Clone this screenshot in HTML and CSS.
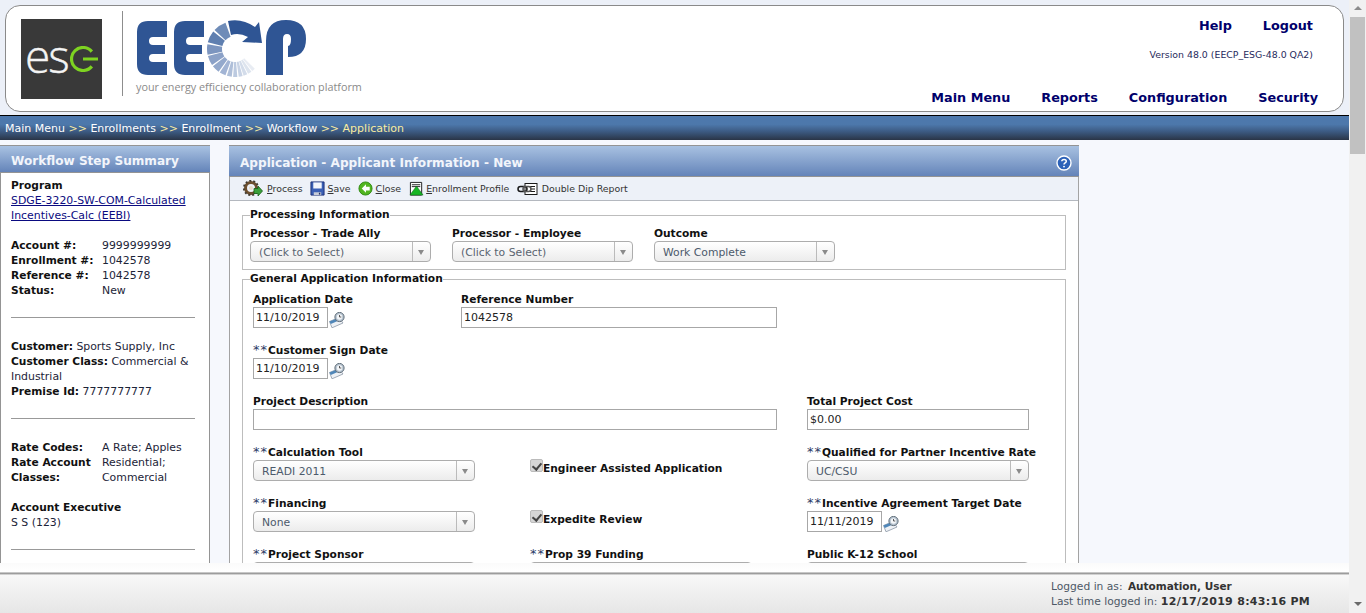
FILE: index.html
```html
<!DOCTYPE html>
<html lang="en">
<head>
<meta charset="utf-8">
<title>EECP - Application</title>
<link rel="stylesheet" href="styles.css">
</head>
<body>
<div class="viewport">
  <div class="page">
    <header class="masthead">
      <div class="brand">
        <div class="esg-logo"><span class="esg-es">es</span><svg class="esg-g" viewBox="0 0 28 26" width="28" height="26"><path d="M21.800 5.600A11.500 11.500 0 1 0 21.800 20.400" fill="none" stroke="#7ed321" stroke-width="3.200"/><path d="M13 13H28" fill="none" stroke="#7ed321" stroke-width="3"/></svg></div>
        <div class="brand-rule"></div>
        <div class="eecp">
          <svg class="eecp-mark" viewBox="0 0 175 60" width="175" height="60" role="img" aria-label="EECP">
            <g fill="#2f5594">
              <path d="M12 1H31V17H17Q13 17 13 21Q13 25 17 25H29V34H17Q13 34 13 38Q13 42 17 42H31V55H12Q1 55 1 44V12Q1 1 12 1Z"/>
              <path transform="translate(37 0)" d="M12 1H31V17H17Q13 17 13 21Q13 25 17 25H29V34H17Q13 34 13 38Q13 42 17 42H31V55H12Q1 55 1 44V12Q1 1 12 1Z"/>
              <path d="M130 55V21Q130 0 150 0Q170 0 170 19Q170 37 152 37V26Q155 26 155 19Q155 14 151 14Q147 14 147 19V55Z"/>
              <path d="M92 1Q106 -2 119 7L123 2L126 23L106 22L112 17Q103 12 95 15Z"/>
            </g>
            <g fill="none" stroke-width="15">
              <circle cx="99" cy="29" r="20.500" pathLength="360" stroke="#6f8cb8" stroke-dasharray="27 360" stroke-dashoffset="-223"/>
              <circle cx="99" cy="29" r="20.500" pathLength="360" stroke="#5f7fb0" stroke-dasharray="25 360" stroke-dashoffset="-194"/>
              <circle cx="99" cy="29" r="20.500" pathLength="360" stroke="#7c95bf" stroke-dasharray="22 360" stroke-dashoffset="-168"/>
              <circle cx="99" cy="29" r="20.500" pathLength="360" stroke="#8ba1c7" stroke-dasharray="20 360" stroke-dashoffset="-145"/>
              <circle cx="99" cy="29" r="20.500" pathLength="360" stroke="#94a9cc" stroke-dasharray="16 360" stroke-dashoffset="-126"/>
              <circle cx="99" cy="29" r="20.500" pathLength="360" stroke="#a2b4d4" stroke-dasharray="13 360" stroke-dashoffset="-110"/>
              <circle cx="99" cy="29" r="20.500" pathLength="360" stroke="#afbfd9" stroke-dasharray="10 360" stroke-dashoffset="-97"/>
              <circle cx="99" cy="29" r="20.500" pathLength="360" stroke="#bccae0" stroke-dasharray="9 360" stroke-dashoffset="-85"/>
              <circle cx="99" cy="29" r="20.500" pathLength="360" stroke="#c8d3e5" stroke-dasharray="8 360" stroke-dashoffset="-74"/>
              <circle cx="99" cy="29" r="20.500" pathLength="360" stroke="#d3dcea" stroke-dasharray="8 360" stroke-dashoffset="-64"/>
              <circle cx="99" cy="29" r="20.500" pathLength="360" stroke="#dde4ee" stroke-dasharray="8 360" stroke-dashoffset="-54"/>
              <circle cx="99" cy="29" r="20.500" pathLength="360" stroke="#e8ecf3" stroke-dasharray="7 360" stroke-dashoffset="-45"/>
            </g>
          </svg>
          <div class="tagline">your energy efficiency collaboration platform</div>
        </div>
      </div>
      <div class="mast-right">
        <nav class="util-nav"><a>Help</a><a>Logout</a></nav>
        <div class="version">Version 48.0 (EECP_ESG-48.0 QA2)</div>
        <nav class="main-nav"><a>Main Menu</a><a>Reports</a><a>Configuration</a><a>Security</a></nav>
      </div>
    </header>

    <div class="crumbs"><a>Main Menu</a><i>&gt;&gt;</i><a>Enrollments</a><i>&gt;&gt;</i><a>Enrollment</a><i>&gt;&gt;</i><a>Workflow</a><i>&gt;&gt;</i><b>Application</b></div>

    <main class="content">
      <aside class="summary">
        <h2 class="panel-title">Workflow Step Summary</h2>
        <div class="summary-body">
          <div class="strong">Program</div>
          <a class="link">SDGE-3220-SW-COM-Calculated Incentives-Calc (EEBI)</a>
          <dl class="facts first-facts">
            <dt>Account #:</dt><dd>9999999999</dd>
            <dt>Enrollment #:</dt><dd>1042578</dd>
            <dt>Reference #:</dt><dd>1042578</dd>
            <dt>Status:</dt><dd>New</dd>
          </dl>
          <hr class="sep">
          <div class="para"><b>Customer:</b> Sports Supply, Inc</div>
          <div class="para"><b>Customer Class:</b> Commercial &amp;</div>
          <div class="para">Industrial</div>
          <div class="para"><b>Premise Id:</b> 7777777777</div>
          <hr class="sep">
          <dl class="facts">
            <dt>Rate Codes:</dt><dd>A Rate; Apples</dd>
            <dt>Rate Account Classes:</dt><dd>Residential; Commercial</dd>
          </dl>
          <div class="strong exec">Account Executive</div>
          <div>S S (123)</div>
          <hr class="sep">
        </div>
      </aside>

      <section class="form-panel">
        <div class="form-head">
          <h1 class="panel-title">Application - Applicant Information - New</h1>
          <svg class="help" viewBox="0 0 16 16" width="16" height="16"><circle cx="8" cy="8" r="7" fill="#2d62b8" stroke="#fff" stroke-width="1.400"/><path d="M5.800 6.300C5.900 3.800 10.300 3.800 10.300 6.300C10.300 8 8 7.900 8 9.500" fill="none" stroke="#fff" stroke-width="1.500"/><circle cx="8" cy="11.600" r=".95" fill="#fff"/></svg>
        </div>
        <div class="toolbar">
          <a class="tool"><svg viewBox="0 0 20 18" width="20" height="18"><circle cx="8" cy="8" r="5.500" fill="none" stroke="#6d4f2e" stroke-width="3"/><circle cx="8" cy="8" r="7.200" fill="none" stroke="#3f3a30" stroke-width="1.800" stroke-dasharray="2 2"/><circle cx="8" cy="8" r="2" fill="#e6dcc8"/><path d="M11 8.500H15V6L19.500 11L15 16V13.500H11Z" fill="#3ba03b" stroke="#175f17" stroke-width=".8"/></svg><span><u>P</u>rocess</span></a>
          <a class="tool"><svg viewBox="0 0 16 16" width="15" height="15"><path d="M1 1H15V15H1Z" fill="#3a5fb5" stroke="#1d2f75"/><path d="M3.500 1.500H12.500V8H3.500Z" fill="#f3f5fb"/><path d="M4 12H12V15H4Z" fill="#c6cbd8"/><path d="M9.500 12.500H11V14.500H9.500Z" fill="#27345f"/></svg><span><u>S</u>ave</span></a>
          <a class="tool"><svg viewBox="0 0 16 16" width="15" height="15"><circle cx="8" cy="8" r="7" fill="#52b51f" stroke="#2f8a12"/><path d="M8.500 3.500L4 8L8.500 12.500V10H12.500V6H8.500Z" fill="#fff"/></svg><span><u>C</u>lose</span></a>
          <a class="tool"><svg viewBox="0 0 16 16" width="15" height="15"><path d="M1.500 1.500H13.500V15H1.500Z" fill="#fff" stroke="#1a1a1a"/><path d="M3 4H12M3 6H12" stroke="#1a1a1a" fill="none"/><path d="M8 5.500L15 15H1Z" fill="#17b524" stroke="#0d6d18" stroke-width=".6"/></svg><span><u>E</u>nrollment Profile</span></a>
          <a class="tool tool-wide"><svg viewBox="0 0 21 14" width="21" height="14"><rect x="8" y="1.500" width="12" height="11" fill="#fff" stroke="#1a1a1a"/><path d="M13 4.500H18M13 7H18M13 9.500H18" stroke="#1a1a1a" fill="none"/><rect x="1" y="4.500" width="9" height="5" rx="2.500" fill="none" stroke="#1a1a1a" stroke-width="1.500"/><rect x="6" y="4.500" width="8" height="5" rx="2.500" fill="none" stroke="#555" stroke-width="1.500"/></svg><span>Double Dip Report</span></a>
        </div>
        <div class="form-body">
          <fieldset class="group group-processing">
            <legend>Processing Information</legend>
            <div class="proc-row">
              <div class="field"><label>Processor - Trade Ally</label><div class="combo"><span class="muted">(Click to Select)</span><em></em></div></div>
              <div class="field"><label>Processor - Employee</label><div class="combo"><span class="muted">(Click to Select)</span><em></em></div></div>
              <div class="field"><label>Outcome</label><div class="combo"><span>Work Complete</span><em></em></div></div>
            </div>
          </fieldset>
          <fieldset class="group group-general">
            <legend>General Application Information</legend>
            <div class="grid">
              <div class="field c1"><label>Application Date</label><div class="date"><div class="input date-input">11/10/2019</div><svg class="cal"><use href="#calicon"/></svg></div></div>
              <div class="field c2-3"><label>Reference Number</label><div class="input ref-short">1042578</div></div>
              <div class="field c1 full"><label><s>**</s>Customer Sign Date</label><div class="date"><div class="input date-input">11/10/2019</div><svg class="cal"><use href="#calicon"/></svg></div></div>
              <div class="field c1-2"><label>Project Description</label><div class="input ref"></div></div>
              <div class="field c3"><label>Total Project Cost</label><div class="input cost">$0.00</div></div>
              <div class="field"><label><s>**</s>Calculation Tool</label><div class="combo"><span>READI 2011</span><em></em></div></div>
              <div class="check"><span class="box"></span><label>Engineer Assisted Application</label></div>
              <div class="field"><label><s>**</s>Qualified for Partner Incentive Rate</label><div class="combo"><span>UC/CSU</span><em></em></div></div>
              <div class="field"><label><s>**</s>Financing</label><div class="combo"><span>None</span><em></em></div></div>
              <div class="check"><span class="box"></span><label>Expedite Review</label></div>
              <div class="field"><label><s>**</s>Incentive Agreement Target Date</label><div class="date"><div class="input date-input">11/11/2019</div><svg class="cal"><use href="#calicon"/></svg></div></div>
              <div class="field"><label><s>**</s>Project Sponsor</label><div class="combo"><span></span><em></em></div></div>
              <div class="field"><label><s>**</s>Prop 39 Funding</label><div class="combo"><span></span><em></em></div></div>
              <div class="field"><label>Public K-12 School</label><div class="combo"><span></span><em></em></div></div>
            </div>
          </fieldset>
        </div>
      </section>
    </main>

    <footer class="status">
      <div class="login-info">Logged in as: <b class="who">Automation, User</b></div>
      <div class="login-info">Last time logged in: <b class="stamp">12/17/2019 8:43:16 PM</b></div>
    </footer>
  </div>
  <div class="scrollbar"><span class="arrow up"></span><span class="thumb"></span><span class="arrow down"></span></div>
</div>
<svg class="defs" width="0" height="0"><defs><symbol id="calicon" viewBox="0 0 16 16"><path d="M0.500 9.500L10 5.500L14 11L3 15.800Z" fill="#eef1f5" stroke="#8a97a6" stroke-width=".8"/><path d="M0.500 9.500L10 5.500L11 8L1.800 12Z" fill="#4f86b8"/><circle cx="10.500" cy="5" r="4.600" fill="#b9c6d2" stroke="#5f6c78" stroke-width="1"/><circle cx="10.500" cy="5" r="2.700" fill="#f4f6f8"/><path d="M10.500 3V5H12.300" fill="none" stroke="#333" stroke-width=".8"/></symbol></defs></svg>
</body>
</html>
```

FILE: styles.css
```css
* { box-sizing: border-box; }
html, body { margin: 0; height: 100%; overflow: hidden; }
body { font-family: "DejaVu Sans", Verdana, sans-serif; font-size: 11px; line-height: 15px; color: #222; background: #f6f8fd; }
.viewport { display: flex; width: 1366px; height: 613px; }
.page { width: 1349px; height: 613px; display: flex; flex-direction: column; background: #f6f8fd; }

.masthead { height: 115px; flex: none; background: #ecf0f8; padding: 5px 4px 3px 5px; display: flex; justify-content: space-between; position: relative; }
.masthead::before { content: ""; position: absolute; left: 5px; top: 5px; width: 1337px; height: 105px; background: #fff; border: 1px solid #8a8a8a; border-radius: 15px; }
.brand { position: relative; display: flex; align-items: flex-start; padding: 14px 0 0 16px; }
.esg-logo { width: 81px; height: 80px; background: #393939; display: flex; align-items: center; padding: 0 0 0 4px; }
.esg-es { color: #f4f4f4; font-family: "Open Sans", sans-serif; font-size: 46px; font-weight: 300; letter-spacing: -2px; line-height: 40px; margin-bottom: 8px; -webkit-text-stroke: .4px #f4f4f4; }
.esg-g { flex: none; margin: 0 0 0 2px; }
.brand-rule { width: 1px; height: 85px; margin: -8px 0 0 20px; background: #8d8d8d; }
.eecp { margin: 1px 0 0 13px; }
.eecp-mark { display: block; }
.tagline { font-family: "Open Sans", sans-serif; font-size: 10.800px; line-height: 14px; color: #8a8a8a; white-space: nowrap; }

.mast-right { position: relative; display: flex; flex-direction: column; align-items: flex-end; padding: 0 27px 0 0; width: 500px; }
.util-nav { display: flex; gap: 31px; font-size: 12.800px; font-weight: 700; color: #00006b; line-height: 18px; margin: 12px 5px 0 0; }
.version { font-size: 9.400px; color: #1f2a5c; line-height: 14px; margin: 13px 5px 0 0; }
.main-nav { display: flex; gap: 31px; font-size: 12.800px; font-weight: 700; color: #00006b; line-height: 18px; margin: 27px 0 0 0; }

.crumbs { height: 25px; flex: none; border-top: 1px solid #000; background: linear-gradient(#4d78ad 0, #4d78ab 35%, #3c5a82 65%, #2a3547 100%); color: #fff; padding: 4px 0 0 5px; line-height: 17px; white-space: nowrap; }
.crumbs i { font-style: normal; color: #f4e9a4; margin: 0 3.500px; }
.crumbs b { font-weight: 400; color: #f8eca0; }

.content { flex: 1; min-height: 0; overflow: hidden; display: flex; align-items: flex-start; gap: 19px; padding: 5px 0 0 0; }
.panel-title { margin: 0; font-size: 12.100px; font-weight: 700; color: #f2f5fb; line-height: 18px; }

.summary { width: 210px; flex: none; border: 1px solid #949494; border-top: 0; background: #fff; }
.summary .panel-title { height: 28px; padding: 6px 0 0 11px; background: linear-gradient(#a9c2e2, #6484b9); border-top: 1px solid #949494; border-bottom: 1px solid #949494; margin: 0 -1px; }
.summary-body { padding: 5px 14px 0 10px; color: #1c2438; font-size: 10.900px; }
.strong, .facts dt, .para b { font-weight: 700; color: #111; font-size: 10.650px; }
.link { color: #0a0a80; text-decoration: underline; display: block; }
.facts { display: grid; grid-template-columns: 91px 1fr; margin: 0; }
.facts dd { margin: 0; }
.first-facts { margin-top: 15px; }
.sep { border: 0; border-top: 1px solid #999; height: 0; margin: 19px 0 21px 0; width: 184px; }
.exec { margin-top: 15px; }

.form-panel { width: 850px; flex: none; border: 1px solid #a3a3a3; border-top: 0; background: #fff; }
.form-head { height: 32px; display: flex; align-items: center; justify-content: space-between; padding: 4px 7px 0 11px; background: linear-gradient(#a8c1e1, #6484b9); border-top: 1px solid #949494; border-bottom: 1px solid #949494; margin: 0 -1px; }
.help { flex: none; }
.toolbar { height: 24px; display: flex; align-items: center; gap: 7.500px; padding: 0 0 0 13px; background: #edf1f8; border-bottom: 1px solid #b4b8bf; font-size: 9.400px; color: #333; }
.tool { display: flex; align-items: center; gap: 2.500px; white-space: nowrap; }
.tool:first-child, .tool-wide { gap: 4px; }

.form-body { padding: 7px 12px 0 12px; }
.group { margin: 0; padding: 0; border: 1px solid #bdbdbd; min-width: 0; }
.group legend { margin-left: 7px; padding: 0; font-weight: 700; font-size: 10.650px; color: #111; line-height: 14px; white-space: nowrap; }
.group-processing { height: 62px; }
.proc-row { display: flex; gap: 21px; padding: 4px 0 0 7px; }
.proc-row .combo { width: 181px; }
.group-general { margin-top: 2px; }
.field label, .check label { font-weight: 700; font-size: 10.650px; color: #111; display: block; white-space: nowrap; }
.field s { text-decoration: none; font-weight: 400; font-size: 13px; line-height: 1px; letter-spacing: 1px; color: #2b3a66; }
.combo { width: 222px; height: 21px; border: 1px solid #adadad; border-radius: 4px; background: linear-gradient(#fff, #ececec); display: flex; justify-content: space-between; color: #4c5a6b; padding-left: 8px; font-size: 10.800px; line-height: 21px; }
.combo .muted { color: #5a6470; }
.combo em { width: 18px; flex: none; border-left: 1px solid #bbb; position: relative; }
.combo em::after { content: ""; position: absolute; left: 5px; top: 8px; border: 3.500px solid transparent; border-top: 5px solid #8a8a8a; border-bottom: 0; }
.grid { display: grid; grid-template-columns: 277px 277px 1fr; grid-auto-rows: 51px; padding: 6px 0 0 10px; }
.full { grid-column: 1 / -1; }
.c2-3 { grid-column: 2 / -1; margin-left: -69px; }
.c1-2 { grid-column: 1 / 3; }
.input { height: 21px; border: 1px solid #a7a7a7; padding: 0 0 0 2px; line-height: 19px; background: #fff; color: #222; }
.ref { width: 524px; }
.ref-short { width: 316px; }
.cost { width: 222px; }
.date { display: flex; align-items: center; gap: 1px; }
.date-input { width: 75px; }
.cal { width: 16px; height: 16px; margin-top: 5px; }
.check { display: flex; align-items: flex-start; padding-top: 14px; }
.check label { line-height: 15px; padding-top: 2px; }
.box { width: 13px; height: 13px; flex: none; background: #d6d6d6; border-radius: 2px; border: 1px solid #bbb; position: relative; }
.box::after { content: ""; position: absolute; left: 3px; top: 1px; width: 4px; height: 7px; border: solid #444; border-width: 0 2px 2px 0; transform: rotate(40deg); }

.status { height: 50px; flex: none; background: linear-gradient(#fbfbfb 0, #fff 9px, #8f8f8f 10px, #a9a9a9 11px, #f8f8f8 12px, #e6e6e6 100%); padding: 16px 0 0 1051px; font-size: 10.700px; line-height: 15px; color: #4d5866; }
.status b { color: #333; font-size: 10.500px; }
.status .who { margin-left: 2px; }
.status .stamp { font-size: 11px; letter-spacing: .3px; }

.scrollbar { width: 17px; height: 613px; flex: none; background: #f1f1f1; display: flex; flex-direction: column; align-items: center; position: relative; }
.thumb { width: 15px; height: 137px; background: #c1c1c1; }
.arrow { height: 17px; flex: none; position: relative; width: 15px; }
.arrow.up::after { content: ""; position: absolute; left: 4px; top: 6px; border: 4px solid transparent; border-bottom: 4px solid #8b8b8b; border-top: 0; }
.arrow.down { position: absolute; bottom: 0; left: 1px; }
.arrow.down::after { content: ""; position: absolute; left: 4px; top: 6px; border: 4px solid transparent; border-top: 4px solid #6a6a6a; border-bottom: 0; }
.defs { position: absolute; }
```
